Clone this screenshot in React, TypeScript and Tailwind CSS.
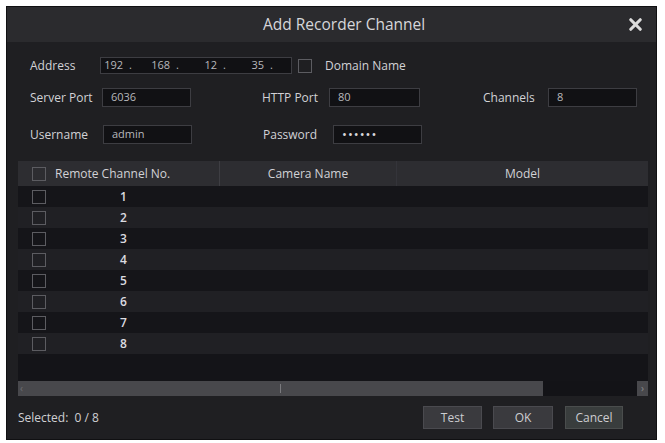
import { X } from 'lucide-react';

const channels = [1, 2, 3, 4, 5, 6, 7, 8];
const ipParts = ['192', '168', '12', '35'];

function Box({ className = '' }: { className?: string }) {
  return <span className={`block h-[14px] w-[14px] border border-[#5c5c61] ${className}`} />;
}

function Field({ value, width, className = '' }: { value: string; width: string; className?: string }) {
  return (
    <div className={`flex h-[19px] items-center border border-[#3d3d42] bg-[#111114] pl-[8px] text-[11px] text-[#b8b8bc] ${width} ${className}`}>
      {value}
    </div>
  );
}

export default function App() {
  return (
    <div className="h-[443px] w-[665px] bg-white p-[6px] font-['Open_Sans',sans-serif]">
      <div className="flex h-[434px] w-[651px] flex-col border border-[#101012] bg-[#1f1f22] text-[12px] text-[#d2d2d6]">
        {/* Title bar */}
        <div className="flex h-[35px] shrink-0 items-center bg-[#2b2b2e]">
          <span className="ml-[256px] text-[15.5px] text-[#d6d6da]">Add Recorder Channel</span>
          <X className="ml-auto mr-[11px] h-[19px] w-[19px] text-[#dcdcdc]" strokeWidth={4} />
        </div>

        {/* Form */}
        <div className="pl-[23px]">
          <div className="mt-[15px] flex h-[17px] items-center">
            <span className="w-[70px]">Address</span>
            <div className="flex h-[17px] w-[192px] items-center border border-[#3d3d42] bg-[#111114] text-[11px] text-[#b8b8bc]">
              {ipParts.map((p) => (
                <div key={p} className="flex w-[47px] items-center">
                  <span className="w-[22px] text-right">{p}</span>
                  <span className="ml-[6px]">.</span>
                </div>
              ))}
            </div>
            <Box className="ml-[6px]" />
            <span className="ml-[13px]">Domain Name</span>
          </div>

          <div className="mt-[14px] flex h-[19px] items-center">
            <span className="w-[72px]">Server Port</span>
            <Field value="6036" width="w-[89px]" />
            <span className="ml-[71px] w-[67px]">HTTP Port</span>
            <Field value="80" width="w-[91px]" />
            <span className="ml-[63px] w-[65px]">Channels</span>
            <Field value="8" width="w-[89px]" />
          </div>

          <div className="mt-[18px] flex h-[19px] items-center">
            <span className="w-[73px]">Username</span>
            <Field value="admin" width="w-[89px]" />
            <span className="ml-[71px] w-[70px]">Password</span>
            <Field value="••••••" width="w-[89px]" className="text-[13px] tracking-[1px] text-[#d8d8dc]" />
          </div>
        </div>

        {/* Table */}
        <div className="ml-[11px] mt-[17px] flex h-[235px] w-[630px] flex-col bg-[#141418]">
          <div className="flex h-[25px] items-center bg-[#2d2d31] text-[12px]">
            <div className="flex h-full w-[202px] items-center border-r border-[#3e3e43] pl-[14px]">
              <Box />
              <span className="ml-[9px]">Remote Channel No.</span>
            </div>
            <div className="flex h-full w-[177px] items-center justify-center border-r border-[#34343a]">Camera Name</div>
            <div className="flex h-full flex-1 items-center justify-center">Model</div>
          </div>
          {channels.map((n) => (
            <div key={n} className={`flex h-[21px] items-center pl-[14px] ${n % 2 === 0 ? 'bg-[#202024]' : 'bg-[#151519]'}`}>
              <Box />
              <span className="ml-[74px] text-[12px] font-semibold text-[#dcdce0]">{n}</span>
            </div>
          ))}
          <div className="flex-1" />
          <div className="flex h-[15px] items-center">
            <div className="flex h-full w-[525px] items-center bg-[#48484c] pl-[2px] text-[10px] text-[#6e6e72]">
              ‹
              <span className="ml-[257px] h-[9px] w-[1px] bg-[#7a7a7e]" />
            </div>
            <div className="h-full flex-1 bg-[#131317]" />
            <div className="flex h-full w-[11px] items-center justify-center bg-[#48484c] text-[10px] text-[#8a8a8e]">›</div>
          </div>
        </div>

        {/* Footer */}
        <div className="mt-[10px] flex h-[23px] items-center pl-[11px]">
          <span className="text-[12px] text-[#cfcfd3]">Selected:&nbsp; 0 / 8</span>
          <button className="ml-auto h-[23px] w-[59px] border border-[#4a4a4f] bg-[#3a3a3e] text-[12px] text-[#cdcdd1]">Test</button>
          <button className="ml-[11px] h-[23px] w-[60px] border border-[#4a4a4f] bg-[#3a3a3e] text-[12px] text-[#cdcdd1]">OK</button>
          <button className="ml-[12px] mr-[33px] h-[23px] w-[58px] border border-[#4a4d4d] bg-[#393d3d] text-[12px] text-[#cdcdd1]">Cancel</button>
        </div>
      </div>
    </div>
  );
}
